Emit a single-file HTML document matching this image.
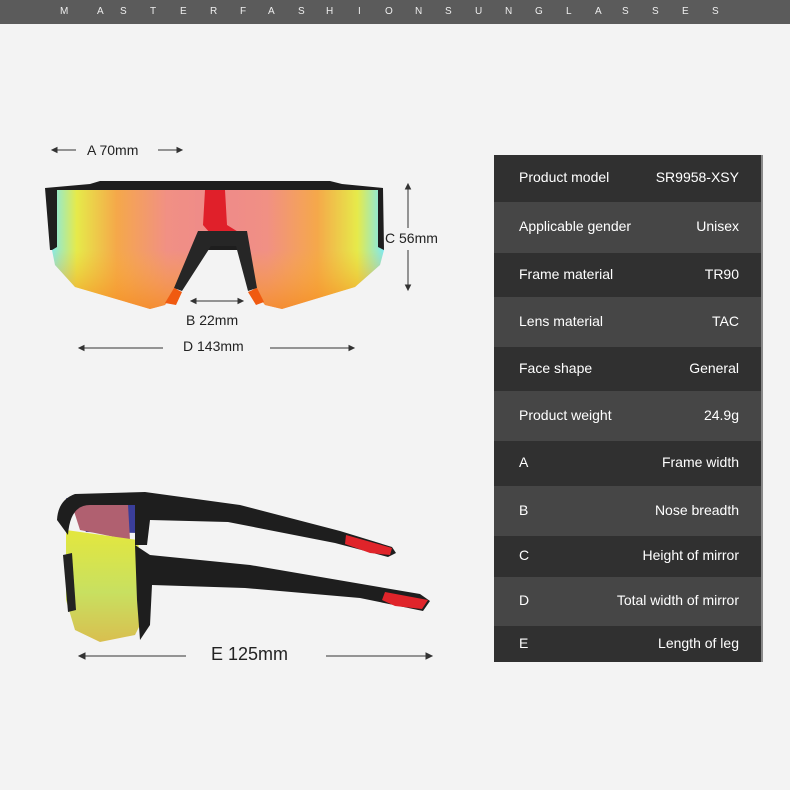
<!DOCTYPE html>
<html><head><meta charset="utf-8"><style>
body{margin:0;width:790px;height:790px;background:#f3f3f3;position:relative;overflow:hidden;font-family:"Liberation Sans","DejaVu Sans",sans-serif}
.hdr{position:absolute;left:0;top:0;width:790px;height:24px;background:#5b5b5b;color:#eee;font-size:10px;line-height:24px}
.hdr span{position:absolute;top:0}
.tbl{position:absolute;left:494px;top:155px;width:267px;height:507px;box-shadow:2px 0 0 #888}
.row{display:flex;justify-content:space-between;align-items:center;padding:0 22px 3px 25px;color:#fff;font-size:14px;box-sizing:border-box}
.d{background:#303030}.l{background:#464646}
.lbl{position:absolute;font-size:14px;color:#222}
</style></head><body>
<div class="hdr">
<span style="left:60px">M</span><span style="left:97px">A</span><span style="left:120px">S</span><span style="left:150px">T</span><span style="left:180px">E</span><span style="left:210px">R</span><span style="left:240px">F</span><span style="left:268px">A</span><span style="left:298px">S</span><span style="left:326px">H</span><span style="left:358px">I</span><span style="left:385px">O</span><span style="left:415px">N</span><span style="left:445px">S</span><span style="left:475px">U</span><span style="left:505px">N</span><span style="left:535px">G</span><span style="left:566px">L</span><span style="left:595px">A</span><span style="left:622px">S</span><span style="left:652px">S</span><span style="left:682px">E</span><span style="left:712px">S</span>
</div>
<div class="tbl">
<div class="row d" style="height:47px"><span>Product model</span><span>SR9958-XSY</span></div>
<div class="row l" style="height:51px"><span>Applicable gender</span><span>Unisex</span></div>
<div class="row d" style="height:44px"><span>Frame material</span><span>TR90</span></div>
<div class="row l" style="height:50px"><span>Lens material</span><span>TAC</span></div>
<div class="row d" style="height:44px"><span>Face shape</span><span>General</span></div>
<div class="row l" style="height:50px"><span>Product weight</span><span>24.9g</span></div>
<div class="row d" style="height:45px"><span>A</span><span>Frame width</span></div>
<div class="row l" style="height:50px"><span>B</span><span>Nose breadth</span></div>
<div class="row d" style="height:41px"><span>C</span><span>Height of mirror</span></div>
<div class="row l" style="height:49px"><span>D</span><span>Total width of mirror</span></div>
<div class="row d" style="height:36px"><span>E</span><span>Length of leg</span></div>
</div>
<svg width="790" height="790" style="position:absolute;left:0;top:0">
<defs>
<linearGradient id="lg" x1="50" x2="384" y1="0" y2="0" gradientUnits="userSpaceOnUse">
<stop offset="0" stop-color="#7ee9f2"/><stop offset="0.08" stop-color="#e6ea4a"/><stop offset="0.2" stop-color="#f5a84a"/><stop offset="0.35" stop-color="#f19084"/><stop offset="0.5" stop-color="#ee8a8a"/><stop offset="0.65" stop-color="#f19084"/><stop offset="0.8" stop-color="#f5a84a"/><stop offset="0.92" stop-color="#e6ea4a"/><stop offset="1" stop-color="#7ee9f2"/>
</linearGradient>
<linearGradient id="vg" x1="0" x2="0" y1="190" y2="310" gradientUnits="userSpaceOnUse">
<stop offset="0.5" stop-color="#f7b030" stop-opacity="0"/><stop offset="1" stop-color="#f58a20" stop-opacity="0.8"/>
</linearGradient>
<linearGradient id="sg" x1="0" x2="0" y1="520" y2="640" gradientUnits="userSpaceOnUse">
<stop offset="0" stop-color="#e8e838"/><stop offset="0.6" stop-color="#c8e060"/><stop offset="1" stop-color="#d8c050"/>
</linearGradient>
</defs>
<path d="M45,188 L90,184 L100,181 L330,181 L342,184 L383,188 L384,250 L50,250 Z" fill="#1e1e1e"/>
<path d="M57,190 L378,190 L378,247 L384,250 L380,265 L355,287 L282,309 L265,305 L252,288 L245,237 L205,237 L178,288 L165,305 L150,309 L75,287 L55,265 L52,250 L57,247 Z" fill="url(#lg)"/>
<path d="M57,190 L378,190 L378,247 L384,250 L380,265 L355,287 L282,309 L265,305 L252,288 L245,237 L205,237 L178,288 L165,305 L150,309 L75,287 L55,265 L52,250 L57,247 Z" fill="url(#vg)"/>
<path d="M205,190 L225,190 L227,225 L240,233 L210,233 L203,225 Z" fill="#e0202a"/>
<path d="M198,231 L247,231 L257,288 L248,291 L236,246 L211,246 L182,291 L174,288 Z" fill="#262626"/>
<path d="M174,288 L182,292 L176,305 L165,303 Z M257,288 L264,302 L256,305 L248,292Z" fill="#f05a10"/>
<g stroke="#333" stroke-width="1" fill="#333">
<line x1="52" y1="150" x2="76" y2="150"/><path d="M52,150 l5,-2.5 v5z"/>
<line x1="158" y1="150" x2="182" y2="150"/><path d="M182,150 l-5,-2.5 v5z"/>
<line x1="408" y1="184" x2="408" y2="228"/><path d="M408,184 l-2.5,5 h5z"/>
<line x1="408" y1="250" x2="408" y2="290"/><path d="M408,290 l-2.5,-5 h5z"/>
<line x1="191" y1="301" x2="243" y2="301"/><path d="M191,301 l5,-2.5 v5z M243,301 l-5,-2.5 v5z"/>
<line x1="79" y1="348" x2="163" y2="348"/><path d="M79,348 l5,-2.5 v5z"/>
<line x1="270" y1="348" x2="354" y2="348"/><path d="M354,348 l-5,-2.5 v5z"/>
<line x1="79" y1="656" x2="186" y2="656"/><path d="M79,656 l6,-3 v6z"/>
<line x1="326" y1="656" x2="432" y2="656"/><path d="M432,656 l-6,-3 v6z"/>
</g>
<path d="M66,498 L86,532 L140,533 L138,500 Z" fill="#3a3e9a"/>
<path d="M72,505 L128,505 L130,540 L80,530Z" fill="#b06070"/>
<path d="M66,530 L138,540 L145,615 L135,635 L100,642 L75,630 L66,600 Z" fill="url(#sg)"/>
<path d="M57,520 Q58,500 75,494 L145,492 L240,505 L340,531 L392,547 L396,553 L388,557 L335,543 L228,522 L150,520 L147,545 L135,545 L135,505 L90,505 Q70,505 68,535 Z" fill="#1e1e1e"/>
<path d="M346,535 L392,548 L390,555 L370,553 L345,544 Z" fill="#e0242a"/>
<path d="M135,545 L150,555 L250,565 L420,594 L430,601 L423,611 L360,598 L245,588 L152,585 L150,625 L140,640 L137,600 Z" fill="#1e1e1e"/>
<path d="M385,592 L428,600 L422,609 L395,606 L382,600Z" fill="#e0242a"/>
<path d="M63,555 L72,553 L76,610 L68,612 Z" fill="#222"/>
</svg>
<div class="lbl" style="left:87px;top:142px">A 70mm</div>
<div class="lbl" style="left:385px;top:230px">C 56mm</div>
<div class="lbl" style="left:186px;top:312px">B 22mm</div>
<div class="lbl" style="left:183px;top:338px">D 143mm</div>
<div class="lbl" style="left:211px;top:644px;font-size:18px">E 125mm</div>
</body></html>
